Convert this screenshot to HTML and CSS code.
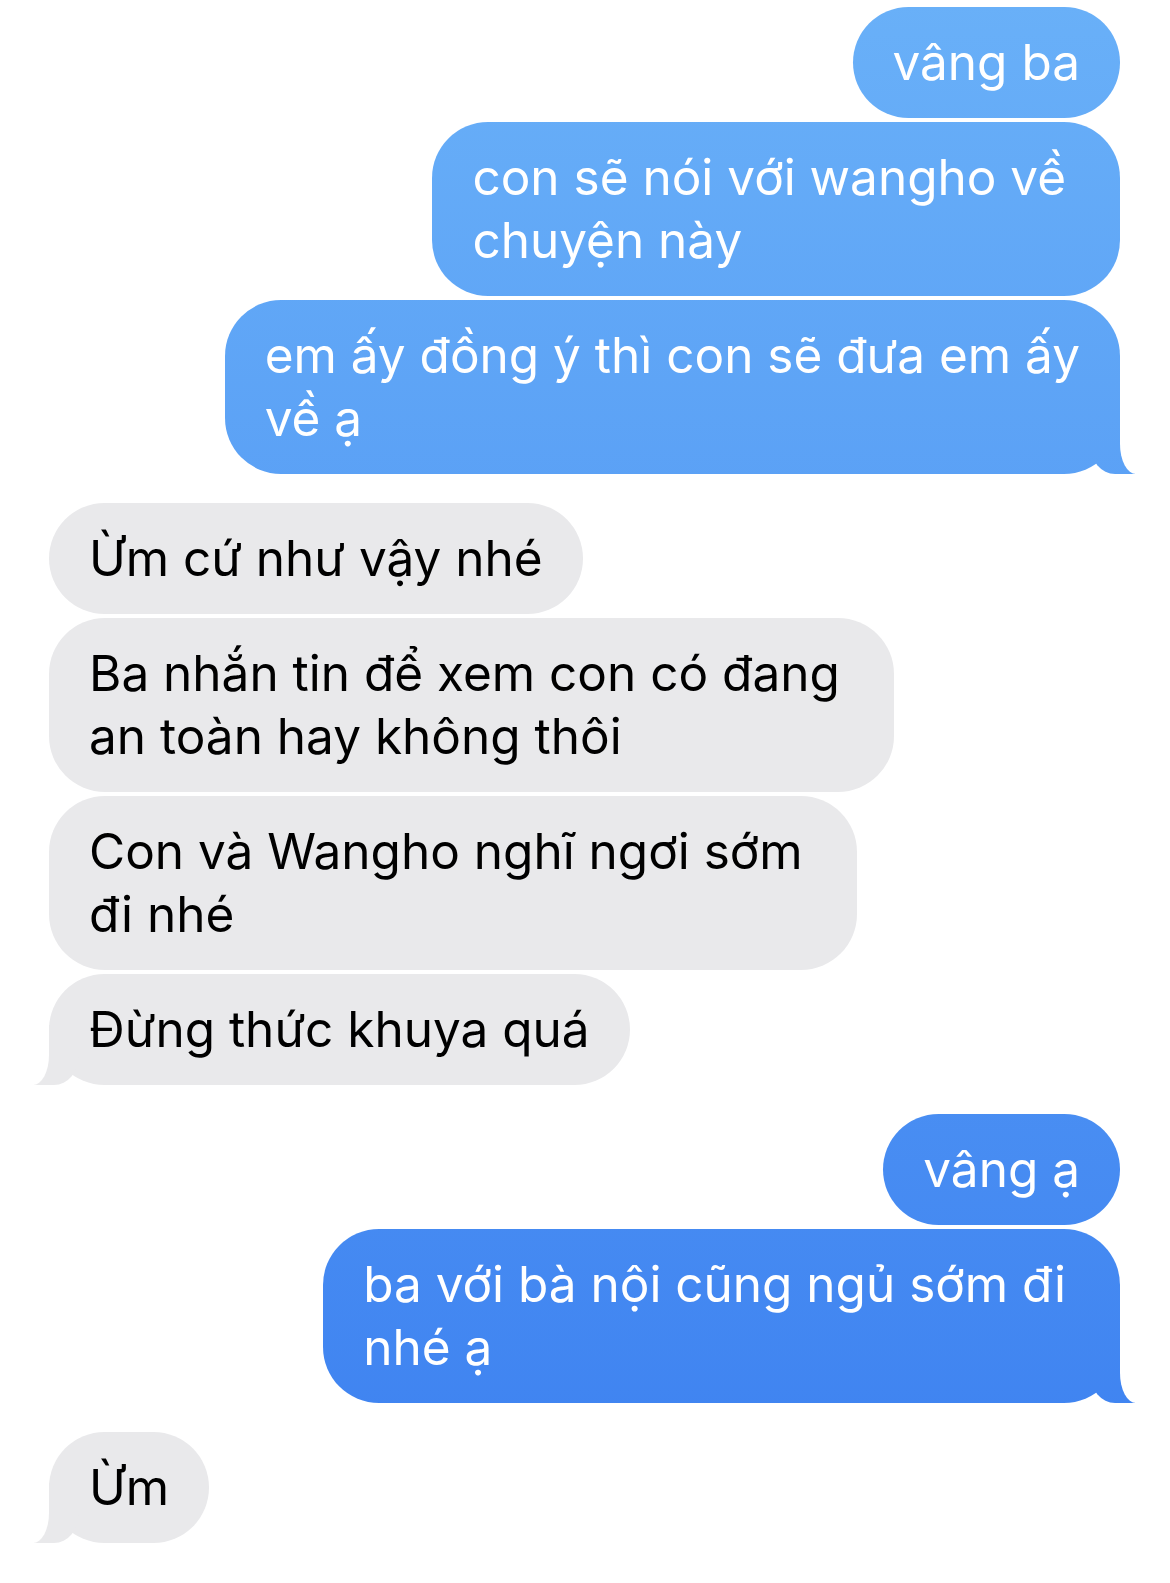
FILE: index.html
```html
<!DOCTYPE html>
<html lang="vi">
<head>
  <meta charset="UTF-8">
  <title>Tin nhắn</title>
  <link rel="stylesheet" href="styles.css">
</head>
<body>
  <!-- CHAT THREAD -->
  <main class="thread">
    <div class="group">
      <div class="msg sent">vâng ba</div>
      <div class="msg sent">con sẽ nói với wangho về&nbsp;<br>chuyện này</div>
      <div class="msg sent tail">em ấy đồng ý thì con sẽ đưa em ấy<br>về ạ</div>
    </div>

    <div class="group">
      <div class="msg recv">Ừm cứ như vậy nhé</div>
      <div class="msg recv">Ba nhắn tin để xem con có đang&nbsp;<br>an toàn hay không thôi</div>
      <div class="msg recv">Con và Wangho nghĩ ngơi sớm&nbsp;<br>đi nhé</div>
      <div class="msg recv tail">Đừng thức khuya quá</div>
    </div>

    <div class="group">
      <div class="msg sent">vâng ạ</div>
      <div class="msg sent tail">ba với bà nội cũng ngủ sớm đi&nbsp;<br>nhé ạ</div>
    </div>

    <div class="group">
      <div class="msg recv tail">Ừm</div>
    </div>
  </main>
</body>
</html>
```

FILE: styles.css
```css
/* Reset */
* {
  margin: 0;
  padding: 0;
  box-sizing: border-box;
}
body {
  font-family: Inter, "Noto Sans", sans-serif;
  background-color: #fff;
  min-height: 100vh;
}
.thread {
  display: flex;
  flex-direction: column;
  gap: 29px;
  padding: 7px 50px 40px 49px;
}
.group {
  display: flex;
  flex-direction: column;
  gap: 4px;
}
/* Bubbles */
.msg {
  position: relative;
  max-width: 920px;
  padding: 24px 40px;
  font-size: 49.5px;
  line-height: 63px;
  border-radius: 56px;
}
.sent {
  align-self: flex-end;
  color: #fff;
  background: linear-gradient(#69b0f8, #3b7ff0) fixed;
}
.recv {
  align-self: flex-start;
  color: #000;
  background-color: #e9e9eb;
}
/* Tails */
.msg.tail::before,
.msg.tail::after {
  content: "";
  position: absolute;
  bottom: 0;
}
.sent.tail::before {
  right: -15px;
  width: 45px;
  height: 60px;
  background: linear-gradient(#69b0f8, #3b7ff0) fixed;
  border-bottom-left-radius: 25px 30px;
}
.sent.tail::after {
  right: -40px;
  width: 40px;
  height: 62px;
  background-color: #fff;
  border-bottom-left-radius: 16px 30px;
}
.recv.tail::before {
  left: -15px;
  width: 45px;
  height: 60px;
  background-color: #e9e9eb;
  border-bottom-right-radius: 25px 30px;
}
.recv.tail::after {
  left: -40px;
  width: 40px;
  height: 62px;
  background-color: #fff;
  border-bottom-right-radius: 16px 30px;
}
```
